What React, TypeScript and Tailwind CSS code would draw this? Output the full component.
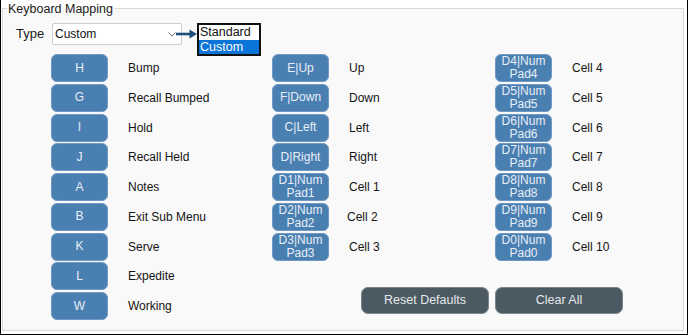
import React from 'react';

type Row = { key: string[]; label: string; shift?: string };

const leftRows: Row[] = [
  { key: ['H'], label: 'Bump' },
  { key: ['G'], label: 'Recall Bumped' },
  { key: ['I'], label: 'Hold' },
  { key: ['J'], label: 'Recall Held' },
  { key: ['A'], label: 'Notes' },
  { key: ['B'], label: 'Exit Sub Menu' },
  { key: ['K'], label: 'Serve' },
  { key: ['L'], label: 'Expedite' },
  { key: ['W'], label: 'Working' },
];

const middleRows: Row[] = [
  { key: ['E|Up'], label: 'Up' },
  { key: ['F|Down'], label: 'Down' },
  { key: ['C|Left'], label: 'Left' },
  { key: ['D|Right'], label: 'Right' },
  { key: ['D1|Num', 'Pad1'], label: 'Cell 1' },
  { key: ['D2|Num', 'Pad2'], label: 'Cell 2', shift: '-ml-[2px]' },
  { key: ['D3|Num', 'Pad3'], label: 'Cell 3' },
];

const rightRows: Row[] = [
  { key: ['D4|Num', 'Pad4'], label: 'Cell 4' },
  { key: ['D5|Num', 'Pad5'], label: 'Cell 5' },
  { key: ['D6|Num', 'Pad6'], label: 'Cell 6' },
  { key: ['D7|Num', 'Pad7'], label: 'Cell 7' },
  { key: ['D8|Num', 'Pad8'], label: 'Cell 8' },
  { key: ['D9|Num', 'Pad9'], label: 'Cell 9' },
  { key: ['D0|Num', 'Pad0'], label: 'Cell 10' },
];

function KeyRow({ row }: { row: Row }) {
  return (
    <div className="flex items-center gap-[20px] h-[28px]">
      <div className="w-[57px] h-[28px] shrink-0 rounded-[6px] bg-[#4a7fb2] border border-[#6f99c2] text-[#e8eef6] text-[12px] leading-[13px] flex flex-col items-center justify-center">
        {row.key.map((k) => (
          <span key={k}>{k}</span>
        ))}
      </div>
      <span className={`text-[12px] text-[#141414] ${row.shift ?? ''}`}>{row.label}</span>
    </div>
  );
}

function Column({ rows, width }: { rows: Row[]; width: string }) {
  return (
    <div className={`flex flex-col gap-[1.75px] ${width}`}>
      {rows.map((r) => (
        <KeyRow key={r.label} row={r} />
      ))}
    </div>
  );
}

export default function App() {
  return (
    <div
      className="relative w-[688px] h-[335px] bg-white border-l border-r border-b border-black overflow-hidden"
      style={{ fontFamily: '"Liberation Sans", Arial, sans-serif' }}
    >
      <fieldset className="ml-[1px] w-[682px] h-[331px] border border-[#d9d9d9] bg-[#f9f9f9] pt-[6px]">
        <legend className="ml-[4px] px-[1px] text-[12.5px] leading-[16px] pt-[1px] text-[#1a1a1a]">
          Keyboard Mapping
        </legend>

        {/* Type selector */}
        <div className="flex items-center pl-[13px]">
          <span className="w-[36px] text-[13px] text-[#1a1a1a]">Type</span>
          <div className="w-[130px] h-[22px] bg-white border border-[#cdcdcd] rounded-[2px] flex items-center justify-between pl-[2px] pr-[5px]">
            <span className="text-[12px] text-[#111]">Custom</span>
            <svg width="8" height="5" viewBox="0 0 8 5" className="mt-[1px]">
              <path d="M0.5 0.5 L4 4 L7.5 0.5" fill="none" stroke="#777" strokeWidth="1" />
            </svg>
          </div>
        </div>

        {/* Mappings */}
        <div className="flex mt-[9px] pl-[48px]">
          <Column rows={leftRows} width="w-[221px]" />
          <div className="flex flex-col">
            <div className="flex">
              <Column rows={middleRows} width="w-[223px]" />
              <Column rows={rightRows} width="w-[150px]" />
            </div>
            <div className="flex gap-[6px] ml-[89px] mt-[26.5px]">
              <button className="w-[128px] h-[27px] rounded-[7px] bg-[#4b5962] border border-[#7a858c] text-[12.5px] text-[#e6e8ea]">
                Reset Defaults
              </button>
              <button className="w-[128px] h-[27px] rounded-[7px] bg-[#4b5962] border border-[#7a858c] text-[12.5px] text-[#e6e8ea]">
                Clear All
              </button>
            </div>
          </div>
        </div>
      </fieldset>

      {/* Arrow pointing to open list */}
      <svg className="absolute left-[175px] top-[29px]" width="22" height="10" viewBox="0 0 22 10">
        <path d="M0 5 L15 5" stroke="#1f4f7a" strokeWidth="2.6" />
        <path d="M13.5 0.5 L21 5 L13.5 9.5 Z" fill="#1f4f7a" />
      </svg>

      {/* Open dropdown list */}
      <div className="absolute left-[196px] top-[23px] w-[64px] h-[33px] border-2 border-[#111] bg-white flex flex-col text-[12.5px] leading-[14.5px]">
        <span className="pl-[1px] text-[#111]">Standard</span>
        <span className="pl-[1px] bg-[#0a74d8] text-white flex-1">Custom</span>
      </div>
    </div>
  );
}
